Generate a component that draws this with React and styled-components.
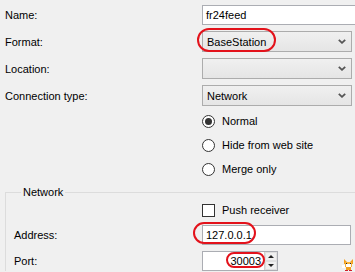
import styled, { createGlobalStyle } from 'styled-components';

const GlobalStyle = createGlobalStyle`
  html, body {
    margin: 0;
    background: #f0f0f0;
    overflow: hidden;
  }
  body {
    font-family: "Liberation Sans", Arial, sans-serif;
    font-size: 11px;
    color: #000;
  }
`;

const Tails = () => (
  <svg width="13" height="14" viewBox="0 0 13 14">
    <path d="M2 1 L5 4 L8 4 L11 1 L11 6 L2 6 Z" fill="#f2a020" />
    <rect x="3" y="4" width="7" height="5" fill="#f7b23a" />
    <rect x="4" y="6" width="5" height="3" fill="#fff" />
    <rect x="4" y="5" width="1" height="1" fill="#222" />
    <rect x="8" y="5" width="1" height="1" fill="#222" />
    <rect x="0" y="7" width="3" height="3" fill="#fff" />
    <rect x="4" y="9" width="5" height="3" fill="#f2a020" />
    <rect x="3" y="12" width="3" height="2" fill="#d0202a" />
    <rect x="7" y="12" width="3" height="2" fill="#d0202a" />
  </svg>
);

export default function App() {
  return (
    <>
      <GlobalStyle />
      <Page>
        <FieldRow>
          <Label>Name:</Label>
          <TextBox $wide>fr24feed</TextBox>
        </FieldRow>
        <FieldRow>
          <Label>Format:</Label>
          <Combo>
            <Highlight $t={8} $b={4} $l={10} $r={10}>BaseStation</Highlight>
            <Chevron />
          </Combo>
        </FieldRow>
        <FieldRow>
          <Label>Location:</Label>
          <Combo>
            <span />
            <Chevron />
          </Combo>
        </FieldRow>
        <FieldRow>
          <Label>Connection type:</Label>
          <Combo>
            <span>Network</span>
            <Chevron />
          </Combo>
        </FieldRow>

        <Options>
          <Choice>
            <Radio $checked />
            Normal
          </Choice>
          <Choice>
            <Radio />
            Hide from web site
          </Choice>
          <Choice>
            <Radio />
            Merge only
          </Choice>
        </Options>

        <Group>
          <Caption>Network</Caption>
          <GroupBody>
            <GroupRow>
              <span />
              <Choice>
                <Check />
                Push receiver
              </Choice>
            </GroupRow>
            <GroupRow>
              <Label>Address:</Label>
              <TextBox>
                <Highlight $t={7} $b={3} $l={13} $r={4}>127.0.0.1</Highlight>
              </TextBox>
            </GroupRow>
            <GroupRow $withIcon>
              <Label>Port:</Label>
              <Numeric>
                <NumericText>
                  <Highlight $t={3} $b={1} $l={4} $r={4}>30003</Highlight>
                </NumericText>
                <Spinner>
                  <SpinButton>
                    <Arrow $up />
                  </SpinButton>
                  <SpinButton>
                    <Arrow />
                  </SpinButton>
                </Spinner>
              </Numeric>
              <Mascot>
                <Tails />
              </Mascot>
            </GroupRow>
          </GroupBody>
        </Group>
      </Page>
    </>
  );
}

const Chevron = () => (
  <svg width="8" height="5" viewBox="0 0 8 5">
    <path d="M0.8 0.8 L4 3.8 L7.2 0.8" fill="none" stroke="#555" strokeWidth="1.8" />
  </svg>
);

const Page = styled.div`
  width: 355px;
  box-sizing: border-box;
  padding: 5px 0 0 5px;
  display: flex;
  flex-direction: column;
  gap: 6px;
`;

const FieldRow = styled.div`
  display: grid;
  grid-template-columns: 197px 1fr;
  align-items: center;
`;

const Label = styled.span`
  white-space: nowrap;
`;

const TextBox = styled.div`
  height: 20px;
  width: ${(p) => (p.$wide ? '180px' : '149px')};
  box-sizing: border-box;
  border: 1px solid #abadb3;
  background: #fff;
  padding: 0 3px;
  display: flex;
  align-items: center;
`;

const Combo = styled.div`
  height: 21px;
  width: 150px;
  box-sizing: border-box;
  border: 1px solid #acacac;
  background: linear-gradient(#f0f0f0, #e5e5e5);
  padding: 0 5px 0 4px;
  display: flex;
  align-items: center;
  justify-content: space-between;
`;

const Highlight = styled.span`
  position: relative;
  &::after {
    content: '';
    position: absolute;
    top: -${(p) => p.$t}px;
    bottom: -${(p) => p.$b}px;
    left: -${(p) => p.$l}px;
    right: -${(p) => p.$r}px;
    border: 2px solid #e3121b;
    border-radius: 12px;
  }
`;

const Options = styled.div`
  margin-left: 197px;
  display: flex;
  flex-direction: column;
  gap: 6px;
`;

const Choice = styled.label`
  height: 18px;
  display: flex;
  align-items: center;
  gap: 7px;
  white-space: nowrap;
`;

const Radio = styled.span`
  width: 13px;
  height: 13px;
  box-sizing: border-box;
  border: 1px solid #333;
  border-radius: 50%;
  background: #fff;
  display: flex;
  align-items: center;
  justify-content: center;
  &::after {
    content: '';
    width: 7px;
    height: 7px;
    border-radius: 50%;
    background: ${(p) => (p.$checked ? '#333' : 'transparent')};
  }
`;

const Check = styled.span`
  width: 13px;
  height: 13px;
  box-sizing: border-box;
  border: 1px solid #333;
  background: #fff;
`;

const Group = styled.fieldset`
  margin: 2px 0 0;
  padding: 0 0 0 8px;
  border: 1px solid #dcdcdc;
  border-right: none;
  border-bottom: none;
  min-width: 0;
`;

const Caption = styled.legend`
  margin-left: 7px;
  padding: 0 2px;
  line-height: 13px;
`;

const GroupBody = styled.div`
  padding-top: 2px;
  display: flex;
  flex-direction: column;
  gap: 6px;
`;

const GroupRow = styled.div`
  display: grid;
  grid-template-columns: ${(p) => (p.$withIcon ? '188px auto 1fr' : '188px 1fr')};
  align-items: center;
`;

const Numeric = styled.div`
  height: 20px;
  width: 76px;
  box-sizing: border-box;
  border: 1px solid #abadb3;
  background: #fff;
  display: flex;
`;

const NumericText = styled.div`
  flex: 1;
  display: flex;
  align-items: center;
  justify-content: flex-end;
  padding-right: 3px;
`;

const Spinner = styled.div`
  width: 12px;
  display: flex;
  flex-direction: column;
  border-left: 1px solid #d0d0d0;
`;

const SpinButton = styled.div`
  flex: 1;
  background: #f0f0f0;
  border: 1px solid #e0e0e0;
  display: flex;
  align-items: center;
  justify-content: center;
`;

const Arrow = styled.span`
  width: 0;
  height: 0;
  border-left: 3px solid transparent;
  border-right: 3px solid transparent;
  ${(p) => (p.$up ? 'border-bottom: 3px solid #222;' : 'border-top: 3px solid #222;')}
`;

const Mascot = styled.div`
  justify-self: end;
  align-self: end;
  margin-bottom: -1px;
  display: flex;
`;
